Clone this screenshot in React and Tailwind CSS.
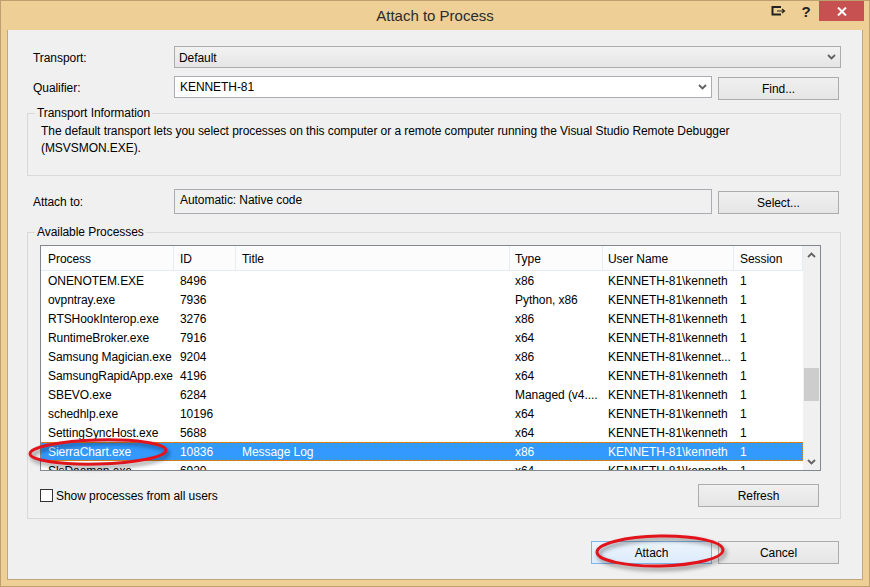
import React from 'react';

const COLS = [
  { w: 'w-[133px]', pl: 'pl-[7px]', name: 'Process' },
  { w: 'w-[62px]', pl: 'pl-[6px]', name: 'ID' },
  { w: 'w-[274px]', pl: 'pl-[6px]', name: 'Title' },
  { w: 'w-[93px]', pl: 'pl-[5px]', name: 'Type' },
  { w: 'w-[131px]', pl: 'pl-[5px]', name: 'User Name' },
  { w: 'w-[69px]', pl: 'pl-[6px]', name: 'Session' },
];

const USER = 'KENNETH-81\\kenneth';

const ROWS = [
  ['ONENOTEM.EXE', '8496', '', 'x86', USER, '1'],
  ['ovpntray.exe', '7936', '', 'Python, x86', USER, '1'],
  ['RTSHookInterop.exe', '3276', '', 'x86', USER, '1'],
  ['RuntimeBroker.exe', '7916', '', 'x64', USER, '1'],
  ['Samsung Magician.exe', '9204', '', 'x86', 'KENNETH-81\\kennet...', '1'],
  ['SamsungRapidApp.exe', '4196', '', 'x64', USER, '1'],
  ['SBEVO.exe', '6284', '', 'Managed (v4....', USER, '1'],
  ['schedhlp.exe', '10196', '', 'x64', USER, '1'],
  ['SettingSyncHost.exe', '5688', '', 'x64', USER, '1'],
  ['SierraChart.exe', '10836', 'Message Log', 'x86', USER, '1'],
  ['SlsDaemon.exe', '6920', '', 'x64', USER, '1'],
];

const SELECTED = 9;

function Chevron({ up }) {
  return (
    <svg width="9" height="6" viewBox="0 0 9 6">
      <path
        d={up ? 'M1 5 L4.5 1.5 L8 5' : 'M1 1 L4.5 4.5 L8 1'}
        fill="none"
        stroke="#606060"
        strokeWidth="1.8"
      />
    </svg>
  );
}

function Button({ children, primary, className = '' }) {
  return (
    <div
      className={`flex items-center justify-center w-[121px] h-[23px] border ${
        primary
          ? 'border-[#7eb4ea] bg-linear-to-b from-[#ecf4fc] to-[#dcecfc]'
          : 'border-[#acacac] bg-linear-to-b from-[#f0f0f0] to-[#e5e5e5]'
      } ${className}`}
    >
      {children}
    </div>
  );
}

function Group({ title, className = '', children }) {
  return (
    <div className={`relative border border-[#d9d9d9] ${className}`}>
      <span className="absolute left-[7px] top-[-9px] px-[2px] bg-[#f0f0f0] leading-[16px]">{title}</span>
      {children}
    </div>
  );
}

export default function App() {
  return (
    <div className="relative w-[870px] h-[587px] border border-[#bd9f70] bg-[#eecf95] flex flex-col text-[12px] tracking-[-0.06px] text-black [font-family:'Liberation_Sans',Arial,sans-serif]">
      {/* title bar */}
      <div className="grid grid-cols-[1fr_auto_1fr] h-[29px]">
        <div />
        <div className="pt-[5px] text-[15px] tracking-normal text-[#2b2b2b] leading-[20px]">Attach to Process</div>
        <div className="flex justify-end items-start pr-[5px]">
          <div className="w-[26px] h-[20px] flex items-center justify-center pr-[4px]">
            <svg width="15" height="10" viewBox="0 0 15 10">
              <path d="M10 1 H1.5 V8.5 H10" fill="none" stroke="#222" strokeWidth="2" />
              <path d="M6 5 H13 M11 3 L13.5 5 L11 7" fill="none" stroke="#222" strokeWidth="1.2" />
            </svg>
          </div>
          <div className="w-[26px] h-[20px] flex items-center justify-center text-[15px] font-bold text-[#222] leading-none">?</div>
          <div className="w-[45px] h-[20px] bg-[#c75050] flex items-center justify-center">
            <svg width="10" height="9" viewBox="0 0 10 9">
              <path d="M1 0.5 L9 8.5 M9 0.5 L1 8.5" stroke="#fff" strokeWidth="2" />
            </svg>
          </div>
        </div>
      </div>

      {/* client */}
      <div className="mx-[6px] h-[550px] border-x border-b border-[#c2a578] bg-[#f0f0f0] flex flex-col pl-[19px] pr-[21px]">
        <div className="mt-[16px] flex h-[22px] items-center">
          <div className="w-[147px] pl-[6px] pt-[2px]">Transport:</div>
          <div className="flex-1 h-full border border-[#acacac] bg-linear-to-b from-[#f2f2f2] to-[#e5e5e5] flex items-center justify-between pl-[4px] pr-[4px]">
            <span className="pt-[1px]">Default</span>
            <Chevron />
          </div>
        </div>

        <div className="mt-[8px] flex h-[24px] items-start">
          <div className="w-[147px] pl-[6px] h-[22px] pt-[2px] flex items-center">Qualifier:</div>
          <div className="w-[538px] h-[22px] border border-[#abadb3] bg-white flex items-center justify-between pl-[5px] pr-[4px]">
            <span>KENNETH-81</span>
            <Chevron />
          </div>
          <Button className="ml-[6px] mt-[1px]">Find...</Button>
        </div>

        <Group title="Transport Information" className="mt-[13px] h-[63px]">
          <div className="pl-[13px] pt-[9px] leading-[17px]">
            The default transport lets you select processes on this computer or a remote computer running the Visual Studio Remote Debugger
            <br />
            (MSVSMON.EXE).
          </div>
        </Group>

        <div className="mt-[13px] flex h-[25px]">
          <div className="w-[147px] pl-[6px] flex items-center">Attach to:</div>
          <div className="w-[538px] h-[25px] border border-[#abadb3] bg-[#f0f0f0] flex items-center pl-[5px] pb-[3px]">
            Automatic: Native code
          </div>
          <Button className="ml-[6px] mt-[2px]">Select...</Button>
        </div>

        <Group title="Available Processes" className="mt-[18px] h-[287px] pl-[12px] pt-[12px]">
          <div className="w-[781px] h-[226px] border border-[#828790] bg-white flex">
            <div className="w-[762px] flex flex-col overflow-hidden">
              <div className="flex h-[25px] shrink-0 border-b border-[#e6ecf3] bg-[#fcfcfd]">
                {COLS.map((c) => (
                  <div key={c.name} className={`${c.w} ${c.pl} flex items-center pt-[1px] border-r border-[#e6ecf3]`}>
                    {c.name}
                  </div>
                ))}
              </div>
              {ROWS.map((r, ri) => (
                <div
                  key={r[0]}
                  className={`flex h-[19px] shrink-0 items-center ${
                    ri === SELECTED
                      ? 'bg-[#3399ff] text-white outline outline-1 outline-dotted outline-[#e0801f] -outline-offset-1'
                      : ''
                  }`}
                >
                  {r.map((cell, ci) => (
                    <div key={ci} className={`${COLS[ci].w} ${COLS[ci].pl} whitespace-nowrap overflow-hidden`}>
                      {cell}
                    </div>
                  ))}
                </div>
              ))}
            </div>
            <div className="w-[17px] bg-[#f0f0f0] flex flex-col">
              <div className="h-[17px] flex items-center justify-center">
                <Chevron up />
              </div>
              <div className="flex-1 pl-[1px]">
                <div className="mt-[105px] w-[15px] h-[33px] bg-[#cdcdcd]" />
              </div>
              <div className="h-[17px] flex items-center justify-center">
                <Chevron />
              </div>
            </div>
          </div>

          <div className="mt-[13px] w-[781px] h-[23px] flex items-center justify-between pr-[2px]">
            <div className="flex items-center">
              <div className="w-[13px] h-[13px] border border-[#333] bg-white" />
              <span className="ml-[3px] pt-[1px]">Show processes from all users</span>
            </div>
            <Button>Refresh</Button>
          </div>
        </Group>

        <div className="mt-[22px] flex justify-end gap-[6px] pr-[2px]">
          <Button primary>Attach</Button>
          <Button>Cancel</Button>
        </div>
      </div>

      {/* red annotation ellipses */}
      <svg
        className="absolute left-0 top-0 pointer-events-none drop-shadow-[2px_3px_2px_rgba(0,0,0,0.45)]"
        width="870"
        height="587"
        viewBox="0 0 870 587"
      >
        <ellipse cx="97" cy="451" rx="68" ry="12" transform="rotate(-1.5 97 451)" fill="none" stroke="#e3131b" strokeWidth="3" />
        <ellipse cx="659" cy="550" rx="63" ry="15" transform="rotate(-1 659 550)" fill="none" stroke="#e3131b" strokeWidth="3" />
      </svg>
    </div>
  );
}
